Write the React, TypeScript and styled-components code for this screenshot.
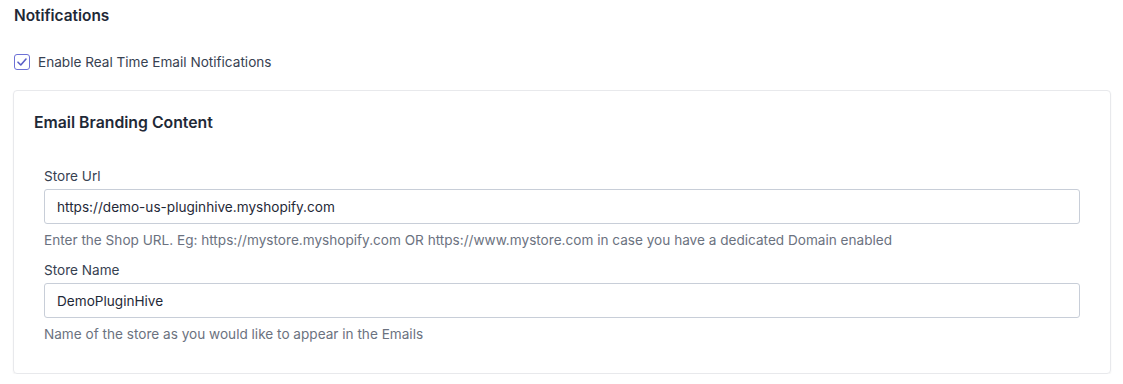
import React from "react";
import styled, { createGlobalStyle } from "styled-components";

const Global = createGlobalStyle`
  html, body { margin: 0; padding: 0; background: #ffffff; }
  body { font-family: Inter, "Noto Sans", Arial, sans-serif; -webkit-font-smoothing: antialiased; }
  * { box-sizing: border-box; }
`;

const Page = styled.div`
  width: 1123px;
  padding: 6px 13px 0 13px;
  display: flex;
  flex-direction: column;
`;

const Title = styled.h2`
  margin: 0 0 0 1px;
  font-size: 15.4px;
  line-height: 20px;
  font-weight: 600;
  color: #1f2937;
`;

const CheckRow = styled.label`
  display: flex;
  align-items: center;
  gap: 8px;
  margin: 26px 0 0 1px;
  font-size: 13.6px;
  line-height: 20px;
  color: #374151;
`;

const Box = styled.span`
  width: 16px;
  height: 16px;
  border: 1px solid #6d71d6;
  border-radius: 3px;
  display: flex;
  align-items: center;
  justify-content: center;
  background: #fff;
`;

const Card = styled.section`
  margin-top: 18px;
  width: 1098px;
  border: 1px solid #e8e9ec;
  border-radius: 4px;
  box-shadow: 0 1px 2px rgba(0, 0, 0, 0.06);
  padding: 22px 30px 30px 20px;
  display: flex;
  flex-direction: column;
`;

const CardTitle = styled.h3`
  margin: 0;
  font-size: 15.8px;
  line-height: 20px;
  font-weight: 600;
  color: #1f2937;
`;

const Fields = styled.div`
  display: flex;
  flex-direction: column;
  gap: 11px;
  margin-top: 33px;
  padding-left: 10px;
`;

const Field = styled.div`
  display: flex;
  flex-direction: column;
`;

const Label = styled.div`
  font-size: 13.6px;
  line-height: 20px;
  color: #374151;
  margin-bottom: 3px;
`;

const Input = styled.input`
  width: 1036px;
  height: 35px;
  border: 1px solid #c8ced8;
  border-radius: 3px;
  padding: 0 12px;
  font-family: inherit;
  font-size: 13.6px;
  color: #1f2937;
  outline: none;
  background: #fff;
`;

const Help = styled.div`
  margin-top: 7px;
  font-size: 13.6px;
  line-height: 18px;
  color: #6b7280;
`;

export default function App() {
  return (
    <>
      <Global />
      <Page>
        <Title>Notifications</Title>
        <CheckRow>
          <Box>
            <svg width="12" height="12" viewBox="0 0 12 12" fill="none">
              <path d="M2 6.2 L4.8 9 L10 3" stroke="#5b5fc7" strokeWidth="1.6" strokeLinecap="round" strokeLinejoin="round" />
            </svg>
          </Box>
          Enable Real Time Email Notifications
        </CheckRow>
        <Card>
          <CardTitle>Email Branding Content</CardTitle>
          <Fields>
            <Field>
              <Label>Store Url</Label>
              <Input defaultValue="https://demo-us-pluginhive.myshopify.com" />
              <Help>
                Enter the Shop URL. Eg: https://mystore.myshopify.com OR https://www.mystore.com in case you have a dedicated Domain enabled
              </Help>
            </Field>
            <Field>
              <Label>Store Name</Label>
              <Input defaultValue="DemoPluginHive" />
              <Help>Name of the store as you would like to appear in the Emails</Help>
            </Field>
          </Fields>
        </Card>
      </Page>
    </>
  );
}
